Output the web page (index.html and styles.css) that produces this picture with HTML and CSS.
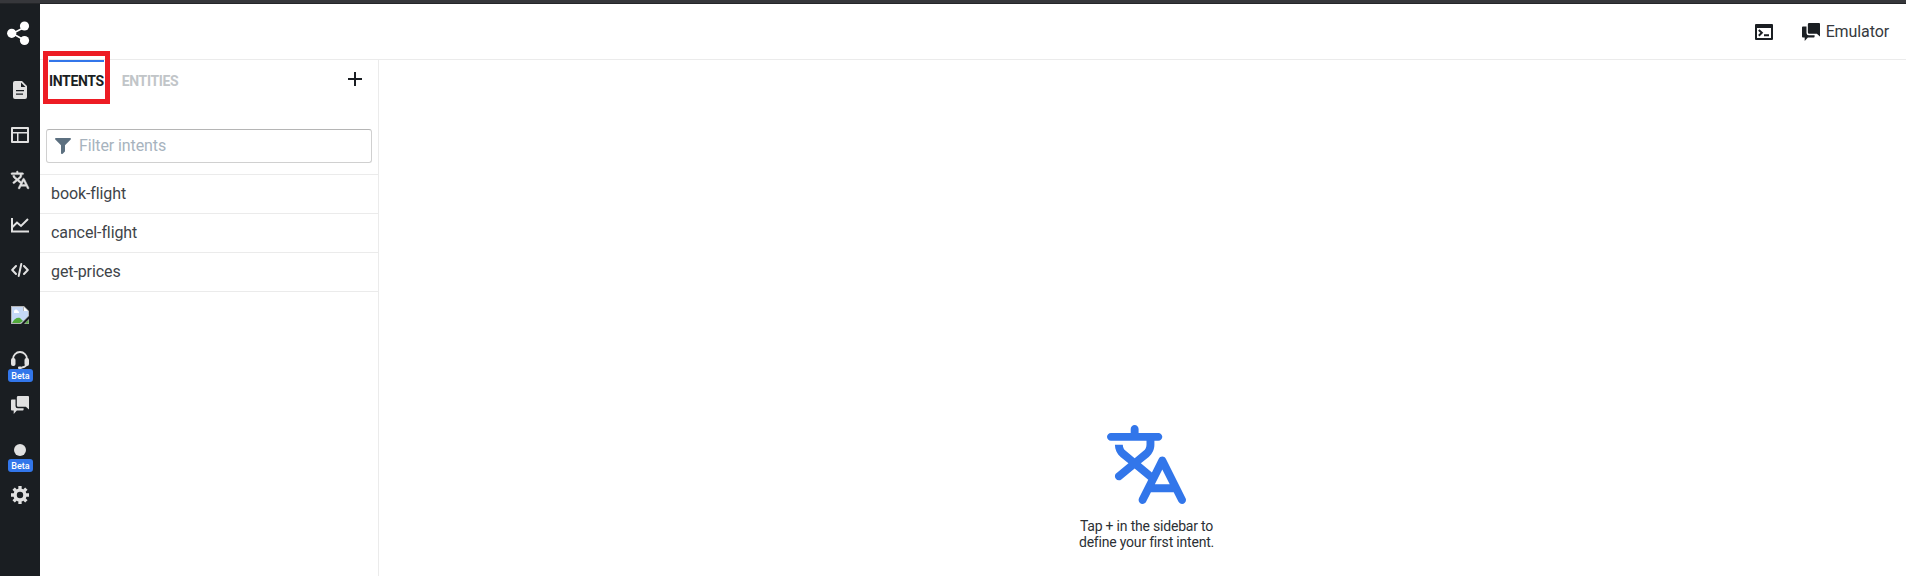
FILE: index.html
```
<!DOCTYPE html>
<html lang="en">
<head>
<meta charset="utf-8">
<title>Intents</title>
<link rel="stylesheet" href="styles.css">
</head>
<body>
<div class="topline"></div>
<div class="app">
  <nav class="sidebar">
    <svg class="logo" viewBox="0 0 24 25"><path d="M18 6 5.500 12.500 18 19.500" fill="none" stroke="#fff" stroke-width="1.600"/><circle cx="4.700" cy="12.300" r="4.600" fill="#fff"/><circle cx="17.500" cy="5" r="4.600" fill="#fff"/><circle cx="17.500" cy="19.500" r="4.600" fill="#fff"/></svg>
    <ul class="menu">
      <li><svg class="icon" viewBox="0 0 18 18"><path fill-rule="evenodd" d="M4 0h7l5 5v11a2 2 0 0 1-2 2H4a2 2 0 0 1-2-2V2a2 2 0 0 1 2-2zm6 1.500V6h4.500zM5 9v1.300h8V9zm0 3.500v1.300h7v-1.300z"/></svg></li>
      <li><svg class="icon" viewBox="0 0 18 18"><path fill-rule="evenodd" d="M1 1h16a1 1 0 0 1 1 1v14a1 1 0 0 1-1 1H1a1 1 0 0 1-1-1V2a1 1 0 0 1 1-1zm1 2v3h14V3zm0 4.500V15h4V7.500zm5.500 0V15H16V7.500z"/></svg></li>
      <li><svg class="icon bold" viewBox="0 0 20 20"><use href="#translate"/></svg></li>
      <li><svg class="icon" viewBox="0 0 18 18"><path d="M1 2v13.500h17M1.500 11 6 6.500l4 3.500 7-7" fill="none" stroke="#e1e1e1" stroke-width="2"/></svg></li>
      <li><svg class="icon" viewBox="0 0 18 18"><path d="M5 5 1.200 9 5 13M13 5l3.800 4L13 13M10.300 3 7.700 15" fill="none" stroke="#e1e1e1" stroke-width="2" stroke-linecap="round" stroke-linejoin="round"/></svg></li>
      <li><svg class="icon" viewBox="0 0 18 18"><path d="M0 0h13l5 5v5L10 18H0z" fill="#b4b4b4"/><path d="M1 1h11v4h5v5l-7 7H1z" fill="#c5d8f5"/><path d="M3 6a2 2 0 0 1 4-1 1.500 1.500 0 0 1 1 2H3z" fill="#fff"/><path d="M1 17c2-4 5-6 8-5l3 3-3 2z" fill="#52aa3b"/><path d="M13 1v4h4z" fill="#fff"/><path d="M18 13v5h-5z" fill="#b4b4b4"/><path d="M14 17.500l3.500-3.500v3.500z" fill="#52aa3b"/></svg></li>
      <li><svg class="icon" viewBox="0 0 18 18"><path d="M2 10V8a7 7 0 0 1 14 0v3c0 3-1 5-5 5.500" fill="none" stroke="#e1e1e1" stroke-width="1.800"/><rect x="0" y="7" width="4.500" height="8" rx="2"/><rect x="13.500" y="7" width="4.500" height="8" rx="2"/><rect x="7" y="15.500" width="4" height="2.500" rx="1"/></svg><span class="beta">Beta</span></li>
      <li><svg class="icon" viewBox="0 0 20 20"><use href="#chat"/></svg></li>
      <li><svg class="icon" viewBox="0 0 18 18"><circle cx="9" cy="9" r="6"/></svg><span class="beta">Beta</span></li>
      <li><svg class="icon" viewBox="0 0 18 18"><circle cx="9" cy="9" r="4.900" fill="none" stroke="#e1e1e1" stroke-width="3.400"/><path d="M9 0v3M9 15v3M0 9h3M15 9h3M2.640 2.640l2.100 2.100M13.260 13.260l2.100 2.100M2.640 15.360l2.100-2.100M13.260 4.740l2.100-2.100" stroke="#e1e1e1" stroke-width="3.300"/></svg></li>
    </ul>
  </nav>
  <div class="page">
    <header class="header">
      <svg class="icon console" viewBox="0 0 18 18"><path fill-rule="evenodd" d="M1 1h16a1 1 0 0 1 1 1v14a1 1 0 0 1-1 1H1a1 1 0 0 1-1-1V2a1 1 0 0 1 1-1zm1 4v10h14V5z"/><path d="M3.800 7 6.800 9.800 3.800 12.700M9 12.300h5" fill="none" stroke="#1a1e22" stroke-width="2"/></svg>
      <button class="emulator"><svg class="icon" viewBox="0 0 20 20"><use href="#chat"/></svg><span>Emulator</span></button>
    </header>
    <div class="content">
      <aside class="panel">
        <div class="tabs">
          <span class="tab active">INTENTS</span>
          <span class="tab">ENTITIES</span>
          <svg class="add" viewBox="0 0 14 14"><path d="M7 0v14M0 7h14" stroke="#1a1e22" stroke-width="2"/></svg>
          <div class="highlight"></div>
        </div>
        <label class="filter"><svg viewBox="0 0 16 16"><path d="M.900 0h14.200c.8 0 1.200 1 .6 1.600L10 7.300V13c0 .3-.1.500-.3.700l-2 2c-.6.6-1.700.2-1.700-.7V7.300L.300 1.600C-.3 1 .1 0 .900 0z"/></svg><input type="text" placeholder="Filter intents"></label>
        <ul class="list">
          <li>book-flight</li>
          <li>cancel-flight</li>
          <li>get-prices</li>
        </ul>
      </aside>
      <main class="empty">
        <svg viewBox="0 0 20 20"><use href="#translate"/></svg>
        <p>Tap + in the sidebar to<br>define your first intent.</p>
      </main>
    </div>
  </div>
</div>
<svg width="0" height="0" class="symbols">
  <defs>
    <path id="translate" d="M19.890 18.560l-4.990-10h-.01c-.17-.33-.5-.56-.89-.56s-.72.23-.89.55H13.100l-1.730 3.460-2.800-2.300 1.990-1.640C11.440 7.340 12 6.230 12 5V4h1c.55 0 1-.45 1-1s-.45-1-1-1H8V1c0-.55-.45-1-1-1S6 .45 6 1v1H1c-.55 0-1 .45-1 1s.45 1 1 1h9v1c0 .62-.28 1.180-.73 1.540L7 8.420 4.730 6.540C4.280 6.180 4 5.620 4 5H2c0 1.230.56 2.340 1.440 3.070l1.990 1.640-3.060 2.520C2.140 12.410 2 12.690 2 13c0 .55.45 1 1 1 .24 0 .45-.09.63-.23L7 11l3.440 2.830-2.330 4.670h.01c-.07.15-.12.31-.12.5 0 .55.45 1 1 1 .39 0 .72-.23.89-.56h.01L11.120 17h5.760l1.220 2.450h.01c.17.32.5.55.89.55.55 0 1-.45 1-1 0-.16-.04-.31-.11-.44zM12.120 15L14 11.240 15.880 15h-3.760z"/>
    <path id="chat" d="M8 0h11a1 1 0 0 1 1 1v14l-3.500-3H8a1.500 1.500 0 0 1-1.500-1.500v-9A1.500 1.500 0 0 1 8 0zM1 4h4v7a2.500 2.500 0 0 0 2.500 2.500H14V15a1 1 0 0 1-1 1H6.500L3 20v-4H1a1 1 0 0 1-1-1V5a1 1 0 0 1 1-1z"/>
  </defs>
</svg>
</body>
</html>
```
FILE: styles.css
```
* { box-sizing: border-box; }
body {
  margin: 0;
  height: 576px;
  overflow: hidden;
  background: #fff;
  color: #404449;
  font-family: Roboto, sans-serif;
  font-size: 16px;
}
ul { list-style: none; margin: 0; padding: 0; }
svg { display: block; flex: none; }
.symbols { position: absolute; }
.topline { height: 4px; background: #36373b; border-bottom: 1px solid #242629; }
.app { display: flex; height: 572px; }
.sidebar { width: 40px; background: #1a1e22; padding-top: 17px; }
.logo { width: 24px; height: 25px; margin-left: 7px; }
.menu { display: flex; flex-direction: column; gap: 27px; padding: 35px 0 0 11px; }
.menu li { position: relative; height: 18px; }
.icon { width: 18px; height: 18px; fill: #e1e1e1; }
.icon.bold { stroke: #e1e1e1; stroke-width: .5; overflow: visible; }
.beta {
  position: absolute;
  left: -3px;
  top: 18px;
  width: 25px;
  height: 13px;
  border-radius: 3px;
  background: #3276ea;
  color: #fff;
  font-size: 9px;
  font-weight: 500;
  line-height: 14px;
  text-align: center;
}
.page { flex: 1; display: flex; flex-direction: column; }
.header {
  height: 56px;
  display: flex;
  justify-content: flex-end;
  align-items: center;
  gap: 29px;
  padding-right: 17px;
  border-bottom: 1px solid #ebebeb;
}
.header .icon { fill: #1a1e22; }
.emulator {
  display: flex;
  align-items: center;
  gap: 6px;
  padding: 0;
  border: 0;
  background: none;
  font: inherit;
  letter-spacing: -.1px;
  color: #35393e;
}
.content { flex: 1; display: flex; }
.panel { width: 339px; border-right: 1px solid #ebebeb; }
.tabs { position: relative; height: 69px; display: flex; align-items: flex-start; padding-left: 9px; }
.tab {
  height: 40px;
  margin-right: 18px;
  border-top: 2px solid transparent;
  color: #c1c5c8;
  font-size: 14px;
  font-weight: 700;
  letter-spacing: -.35px;
  line-height: 38px;
}
.tab.active { color: #1a1e22; border-color: #3276ea; }
.add { width: 14px; height: 14px; margin: 12px 16px 0 auto; }
.highlight {
  position: absolute;
  left: 3px;
  top: -9px;
  width: 67px;
  height: 53px;
  border: 5px solid #ed1c24;
}
.filter {
  display: flex;
  align-items: center;
  gap: 8px;
  width: 326px;
  height: 34px;
  margin-left: 6px;
  padding-left: 8px;
  border: 1px solid #d0d0d0;
  border-top-color: #b5b5b5;
  border-radius: 3px;
}
.filter svg { width: 16px; height: 16px; fill: #5c7080; }
.filter input {
  width: 270px;
  padding: 0 0 2px;
  border: 0;
  outline: 0;
  background: none;
  font: inherit;
  letter-spacing: -.1px;
}
.filter input::placeholder { color: #a7b3be; }
.list { margin-top: 11px; border-top: 1px solid #ebebeb; letter-spacing: -.1px; }
.list li { height: 39px; padding-left: 11px; line-height: 38px; border-bottom: 1px solid #ebebeb; }
.empty { flex: 1; display: flex; flex-direction: column; align-items: center; padding-top: 365px; padding-left: 8px; }
.empty svg { width: 79px; height: 79px; fill: #3276ea; }
.empty p { margin: 14px 0 0; color: #2c3035; font-size: 14px; letter-spacing: -.2px; line-height: 16px; text-align: center; }
```
